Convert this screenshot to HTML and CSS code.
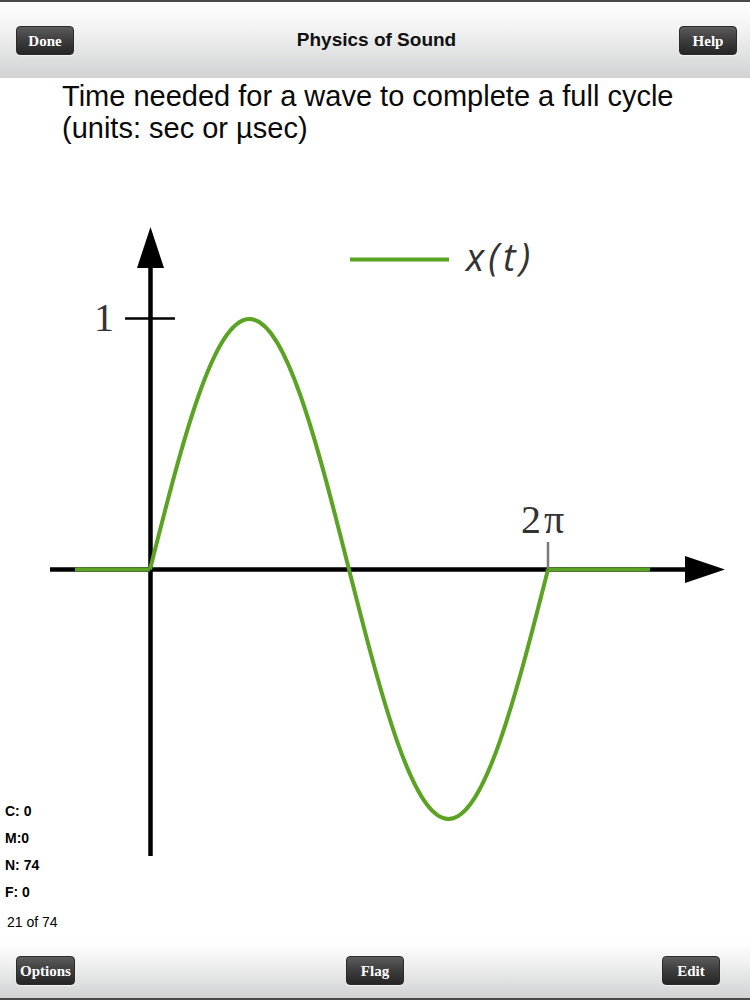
FILE: index.html
```html
<!DOCTYPE html>
<html lang="en">

<head>
    <meta charset="UTF-8">
    <meta name="viewport" content="width=device-width, initial-scale=1.0">
    <title>Physics of Sound</title>
    <link rel="stylesheet" href="styles.css">
</head>

<body>
    <!-- Top bar -->
    <header class="topbar">
        <div class="bar-left"><a class="btn" href="#">Done</a></div>
        <h1 class="title">Physics of Sound</h1>
        <div class="bar-right"><a class="btn" href="#">Help</a></div>
    </header>

    <!-- Card -->
    <main class="card">
        <p class="question">Time needed for a wave to complete a full cycle<br>(units: sec or µsec)</p>

        <svg class="chart" width="750" height="720" viewBox="0 150 750 720">
            <!-- axes -->
            <line class="axis" x1="50" y1="569.5" x2="690" y2="569.5" />
            <polygon class="arrow" points="725,569.5 685,556 685,583" />
            <line class="axis" x1="150.5" y1="262" x2="150.5" y2="856" />
            <polygon class="arrow" points="150.5,227 137,268 164,268" />

            <!-- ticks -->
            <line class="tick" x1="125" y1="318.5" x2="175" y2="318.5" />
            <line class="tick gray" x1="548" y1="542" x2="548" y2="569" />
            <text class="label" x="94" y="331">1</text>
            <text class="label wide" x="521" y="533">2π</text>

            <!-- signal -->
            <line class="wave" x1="75" y1="569.5" x2="150" y2="569.5" />
            <path class="wave" d="M150,569.5 C182.45,440.9 213.49,319 249.5,319 C285.51,319 316.55,440.9 349,569.5 C381.45,697.1 412.49,819 448.5,819 C484.51,819 515.55,697.1 548,569.5" />
            <line class="wave" x1="548" y1="569.5" x2="650" y2="569.5" />

            <!-- legend -->
            <line class="wave" x1="350" y1="259.5" x2="449" y2="259.5" />
            <text class="legend" x="466" y="271">x(t)</text>
        </svg>

        <div class="stats">
            <div class="stat">C: 0</div>
            <div class="stat">M:0</div>
            <div class="stat">N: 74</div>
            <div class="stat">F: 0</div>
            <div class="count">21 of 74</div>
        </div>
    </main>

    <!-- Bottom bar -->
    <footer class="bottombar">
        <div class="bar-left"><a class="btn" href="#">Options</a></div>
        <div class="bar-center"><a class="btn" href="#">Flag</a></div>
        <div class="bar-right edit"><a class="btn" href="#">Edit</a></div>
    </footer>
</body>

</html>
```

FILE: styles.css
```css
body {
    margin: 0;
    width: 750px;
    height: 1000px;
    overflow: hidden;
    background: #fff;
    font-family: 'Liberation Sans', Arial, sans-serif;
    color: #000;
}

.topbar,
.bottombar {
    display: grid;
    grid-template-columns: 1fr auto 1fr;
    align-items: center;
    box-sizing: border-box;
}

.topbar {
    height: 78px;
    padding: 0 13px 0 16px;
    border-top: 2px solid #4a4a4a;
    background: linear-gradient(to bottom, #ffffff 0%, #f3f3f3 35%, #d0d2d3 100%);
}

.bottombar {
    height: 58px;
    padding: 0 16px;
    border-bottom: 2px solid #4a4a4a;
    background: linear-gradient(to bottom, #ffffff 0%, #f2f2f2 35%, #d0d2d3 100%);
}

.bar-left {
    justify-self: start;
}

.bar-center {
    justify-self: center;
}

.bar-right {
    justify-self: end;
}

.bar-right.edit {
    margin-right: 14px;
}

.title {
    margin: 0;
    font-size: 19px;
    font-weight: bold;
    color: #111;
}

.btn {
    display: inline-block;
    height: 29px;
    line-height: 28px;
    padding: 0 3px;
    min-width: 58px;
    box-sizing: border-box;
    text-align: center;
    border-radius: 4px;
    border: 1px solid #2b2b2b;
    background: linear-gradient(to bottom, #5c5c5c 0%, #3d3d3d 50%, #262626 100%);
    box-shadow: 0 1px 1px rgba(255, 255, 255, 0.6);
    color: #fff;
    text-decoration: none;
    font-family: 'Liberation Serif', 'Times New Roman', serif;
    font-weight: bold;
    font-size: 15px;
}

.card {
    position: relative;
    height: 864px;
    overflow: hidden;
}

.question {
    margin: 0;
    padding: 2px 20px 6px 62px;
    font-size: 29px;
    line-height: 32px;
    color: #0a0a0a;
}

.chart {
    display: block;
}

.axis {
    stroke: #000;
    stroke-width: 4.5;
}

.arrow {
    fill: #000;
}

.tick {
    stroke: #000;
    stroke-width: 2.5;
}

.tick.gray {
    stroke: #7a7a7a;
}

.label {
    font-family: 'Liberation Serif', 'Times New Roman', serif;
    font-size: 40px;
    fill: #333;
}

.label.wide {
    letter-spacing: 3px;
}

.wave {
    fill: none;
    stroke: #5ba322;
    stroke-width: 4;
}

.legend {
    font-family: 'Open Sans', sans-serif;
    font-style: italic;
    font-size: 38px;
    letter-spacing: 4px;
    fill: #333;
}

.stats {
    position: absolute;
    left: 5px;
    top: 720px;
}

.stat {
    font-size: 14px;
    font-weight: bold;
    line-height: 27px;
}

.count {
    margin-top: 3px;
    padding-left: 2px;
    font-size: 14px;
    line-height: 27px;
}
```
